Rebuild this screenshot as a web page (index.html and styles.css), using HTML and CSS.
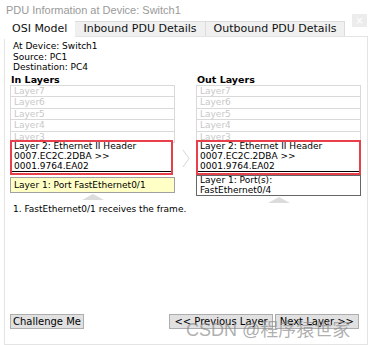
FILE: index.html
```html
<!DOCTYPE html>
<html lang="en">
<head>
  <meta charset="UTF-8" />
  <title>PDU Information at Device: Switch1</title>
  <link rel="stylesheet" href="styles.css">
</head>
<body>

<div class="window">
  <div class="titlebar">
    <span class="title">PDU Information at Device: Switch1</span>
    <span class="close">&times;</span>
  </div>

  <div class="tabs">
    <div class="tab active">OSI Model</div>
    <div class="tab">Inbound PDU Details</div>
    <div class="tab">Outbound PDU Details</div>
  </div>

  <div class="panel">
    <div class="info">
      <div>At Device: Switch1</div>
      <div>Source: PC1</div>
      <div>Destination: PC4</div>
    </div>

    <div class="columns">
      <div class="col in">
        <div class="col-title">In Layers</div>
        <div class="layer dim first">Layer7</div>
        <div class="layer dim">Layer6</div>
        <div class="layer dim">Layer5</div>
        <div class="layer dim">Layer4</div>
        <div class="layer dim">Layer3</div>
        <div class="layer selected">
          <div class="inner">Layer 2: Ethernet II Header<br>0007.EC2C.2DBA &gt;&gt;<br>0001.9764.EA02</div>
        </div>
        <div class="layer current">Layer 1: Port FastEthernet0/1</div>
        <div class="chevron"></div>
      </div>

      <div class="mid-arrow">
        <svg width="8" height="19" viewBox="0 0 8 19"><path d="M1 1 L7 9.5 L1 18" fill="none" stroke="#d6d6d6" stroke-width="1"/></svg>
      </div>

      <div class="col out">
        <div class="col-title">Out Layers</div>
        <div class="layer dim first">Layer7</div>
        <div class="layer dim">Layer6</div>
        <div class="layer dim">Layer5</div>
        <div class="layer dim">Layer4</div>
        <div class="layer dim">Layer3</div>
        <div class="layer selected">
          <div class="inner">Layer 2: Ethernet II Header<br>0007.EC2C.2DBA &gt;&gt;<br>0001.9764.EA02</div>
        </div>
        <div class="layer plain">Layer 1: Port(s):<br>FastEthernet0/4</div>
        <div class="chevron"></div>
      </div>
    </div>

    <ol class="steps">
      <li>FastEthernet0/1 receives the frame.</li>
    </ol>

    <div class="buttons">
      <button>Challenge Me</button>
      <div class="nav">
        <button>&lt;&lt; Previous Layer</button>
        <button>Next Layer &gt;&gt;</button>
      </div>
    </div>
  </div>
</div>

<div class="watermark">CSDN @程序猿世家</div>

</body>
</html>
```

FILE: styles.css
```css
body {
  margin: 0;
  background: #ffffff;
  font-family: "DejaVu Sans", Verdana, sans-serif;
  font-size: 9px;
  color: #000;
  position: relative;
  height: 345px;
  overflow: hidden;
}

.window {
  padding: 0 3px 0 4px;
}

.titlebar {
  display: flex;
  justify-content: space-between;
  align-items: flex-start;
  height: 21px;
  padding-left: 2px;
}

.title {
  font-family: "Liberation Sans", Arial, sans-serif;
  font-size: 11px;
  color: #9a9a9a;
  margin-top: 4px;
}

.close {
  width: 15px;
  height: 13px;
  background: #ececec;
  color: #ffffff;
  font-size: 10px;
  line-height: 13px;
  text-align: center;
  margin-top: 14px;
  margin-right: 1px;
  position: relative;
  z-index: 2;
}

.tabs {
  display: flex;
  height: 15px;
}

.tab {
  padding: 0 8px;
  line-height: 14px;
  font-size: 11px;
  background: #f0f0f0;
  border: 1px solid #dcdcdc;
  border-bottom: none;
  margin-left: -1px;
  color: #111;
}

.tab.active {
  background: #ffffff;
  border-color: #ffffff;
  margin-left: 0;
  padding: 0 7px 0 7px;
  height: 17px;
  position: relative;
  z-index: 1;
}

.panel {
  border: 1px solid #e4e4e4;
  height: 303px;
  padding: 4px 6px 0 5px;
  position: relative;
}

.info {
  padding-left: 3px;
  line-height: 10.5px;
}

.columns {
  display: flex;
  margin-top: 1px;
}

.col {
  width: 165px;
  display: flex;
  flex-direction: column;
}

.col-title {
  font-weight: bold;
  font-size: 9.5px;
  line-height: 11px;
  padding-left: 1px;
}

.layer {
  border: 1px solid #d9d9d9;
  border-top: none;
  padding: 0 3px;
  line-height: 10.5px;
}

.layer.first {
  border-top: 1px solid #d9d9d9;
}

.layer.dim {
  color: #c8c8c8;
}

.layer.selected {
  border: 2px solid #e8404a;
  padding: 0 0 1px;
  margin-top: -3px;
  position: relative;
  background: #fff;
}

.in .layer.selected {
  margin-right: 2px;
}

.layer.selected .inner {
  border-bottom: 1px solid #000;
  padding: 0 2px;
  line-height: 9.8px;
}

.layer.current {
  background: #ffffc6;
  border: 1px solid #a0a0a0;
  line-height: 14px;
  margin-top: 2px;
}

.layer.plain {
  border: 1px solid #666;
  line-height: 9.5px;
}

.chevron {
  align-self: center;
  width: 0;
  height: 0;
  margin-top: 1px;
  border-left: 11px solid transparent;
  border-right: 11px solid transparent;
  border-bottom: 6px solid #dcdcdc;
}

.mid-arrow {
  width: 21px;
  display: flex;
  justify-content: center;
  padding-top: 75px;
}

.steps {
  margin: 1px 0 0 0;
  padding-left: 3px;
  list-style: none;
  counter-reset: step;
}

.steps li::before {
  counter-increment: step;
  content: counter(step) ". ";
}

.buttons {
  position: absolute;
  left: 5px;
  right: 8px;
  bottom: 15px;
  display: flex;
  justify-content: space-between;
}

.nav {
  display: flex;
  gap: 2px;
}

button {
  font-family: "DejaVu Sans", Verdana, sans-serif;
  font-size: 10px;
  background: #e1e1e1;
  border: 1px solid #adadad;
  padding: 0 2px;
  height: 15px;
  line-height: 13px;
  color: #000;
}

.nav button {
  padding: 0 4px;
}

.watermark {
  position: absolute;
  left: 186px;
  top: 315px;
  font-family: "Liberation Sans", "Noto Sans CJK SC", sans-serif;
  font-size: 18px;
  color: rgba(140, 140, 140, 0.7);
  pointer-events: none;
}
```
